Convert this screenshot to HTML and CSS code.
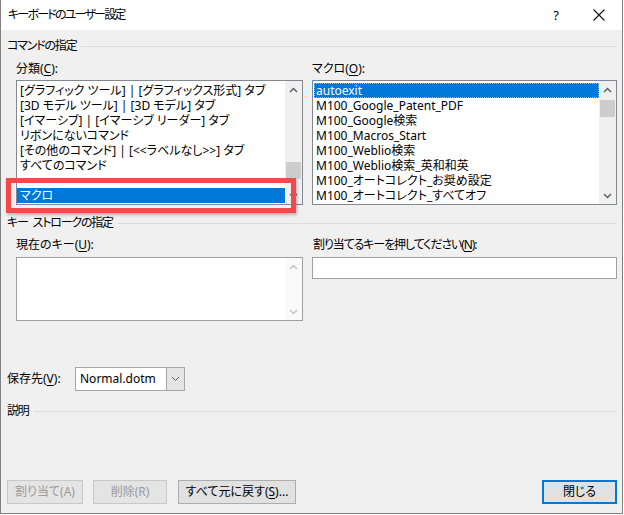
FILE: index.html
```html
<!DOCTYPE html>
<html lang="ja">
<head>
<meta charset="utf-8">
<title>キーボードのユーザー設定</title>
<link rel="stylesheet" href="styles.css">
</head>
<body>
<div class="window">
  <div class="titlebar">
    <span class="title">キーボードのユーザー設定</span>
    <span class="help">?</span>
    <span class="close"><svg width="12" height="12" viewBox="0 0 12 12"><path d="M0.5 0.5 L11.5 11.5 M11.5 0.5 L0.5 11.5" stroke="#111" stroke-width="1.1" fill="none"/></svg></span>
  </div>
  <div class="content">
    <div class="group"><span class="group-text">コマンドの指定</span></div>
    <div class="cols cols-top">
      <div class="field">
        <div class="label">分類(<u>C</u>):</div>
        <div class="listbox list-big">
          <ul class="items">
            <li>[グラフィック ツール] | [グラフィックス形式] タブ</li>
            <li>[3D モデル ツール] | [3D モデル] タブ</li>
            <li>[イマーシブ] | [イマーシブ リーダー] タブ</li>
            <li>リボンにないコマンド</li>
            <li>[その他のコマンド] | [&lt;&lt;ラベルなし&gt;&gt;] タブ</li>
            <li>すべてのコマンド</li>
            <li>&nbsp;</li>
            <li class="sel">マクロ</li>
          </ul>
          <div class="scrollbar">
            <div class="sb-btn"><svg width="9" height="6" viewBox="0 0 9 6"><path d="M1 5 L4.5 1.5 L8 5" fill="none" stroke="#606060" stroke-width="1.5"/></svg></div>
            <div class="sb-track"><div class="thumb" style="margin-top:64px"></div></div>
            <div class="sb-btn"><svg width="9" height="6" viewBox="0 0 9 6"><path d="M1 1 L4.5 4.5 L8 1" fill="none" stroke="#606060" stroke-width="1.5"/></svg></div>
          </div>
        </div>
      </div>
      <div class="field">
        <div class="label">マクロ(<u>O</u>):</div>
        <div class="listbox list-big">
          <ul class="items items-right">
            <li class="sel focus">autoexit</li>
            <li>M100_Google_Patent_PDF</li>
            <li>M100_Google検索</li>
            <li>M100_Macros_Start</li>
            <li>M100_Weblio検索</li>
            <li>M100_Weblio検索_英和和英</li>
            <li>M100_オートコレクト_お奨め設定</li>
            <li>M100_オートコレクト_すべてオフ</li>
          </ul>
          <div class="scrollbar">
            <div class="sb-btn"><svg width="9" height="6" viewBox="0 0 9 6"><path d="M1 5 L4.5 1.5 L8 5" fill="none" stroke="#606060" stroke-width="1.5"/></svg></div>
            <div class="sb-track"><div class="thumb" style="margin-top:2px"></div></div>
            <div class="sb-btn"><svg width="9" height="6" viewBox="0 0 9 6"><path d="M1 1 L4.5 4.5 L8 1" fill="none" stroke="#606060" stroke-width="1.5"/></svg></div>
          </div>
        </div>
      </div>
    </div>

    <div class="group group-keys"><span class="group-text">キー ストロークの指定</span></div>
    <div class="cols cols-mid">
      <div class="field">
        <div class="label">現在のキー(<u>U</u>):</div>
        <div class="listbox list-keys">
          <ul class="items"></ul>
          <div class="scrollbar sb-disabled">
            <div class="sb-btn"><svg width="9" height="6" viewBox="0 0 9 6"><path d="M1 5 L4.5 1.5 L8 5" fill="none" stroke="#c4c4c4" stroke-width="1.5"/></svg></div>
            <div class="sb-track"></div>
            <div class="sb-btn"><svg width="9" height="6" viewBox="0 0 9 6"><path d="M1 1 L4.5 4.5 L8 1" fill="none" stroke="#c4c4c4" stroke-width="1.5"/></svg></div>
          </div>
        </div>
      </div>
      <div class="field">
        <div class="label label-new">割り当てるキーを押してください(<u>N</u>):</div>
        <div class="textbox"></div>
      </div>
    </div>

    <div class="save-row">
      <span class="save-label">保存先(<u>V</u>):</span>
      <div class="combo">
        <span class="combo-text">Normal.dotm</span>
        <span class="combo-btn"><svg width="9" height="6" viewBox="0 0 9 6"><path d="M1 1 L4.5 4.5 L8 1" fill="none" stroke="#606060" stroke-width="1"/></svg></span>
      </div>
    </div>

    <div class="group group-desc"><span class="group-text">説明</span></div>

    <div class="buttons">
      <button class="btn disabled btn-assign">割り当て(A)</button>
      <button class="btn disabled btn-delete">削除(R)</button>
      <button class="btn btn-reset">すべて元に戻す(<u>S</u>)...</button>
      <button class="btn btn-close">閉じる</button>
    </div>
  </div>
  <div class="annotation"></div>
</div>
</body>
</html>
```
FILE: styles.css
```css
* { box-sizing: border-box; }
html, body { margin: 0; padding: 0; background: #ffffff; }
body {
  font-family: "Noto Sans", "Noto Sans CJK JP", sans-serif;
  font-size: 12px;
  color: #000;
  font-feature-settings: "palt";
}
u { text-decoration: underline; text-underline-offset: 2px; }

.window {
  position: relative;
  width: 623px;
  height: 514px;
  background: #f0f0f0;
  border: 1px solid #808080;
  border-top: none;
  display: flex;
  flex-direction: column;
}

.titlebar {
  height: 30px;
  background: #ffffff;
  display: flex;
  align-items: center;
  padding-left: 7px;
}
.title { flex: 1; line-height: 16px; letter-spacing: -1.8px; }
.help { width: 40px; text-align: center; font-size: 13px; }
.close { width: 46px; display: flex; justify-content: center; align-items: center; }
.close svg { display: block; }

.content {
  flex: 1;
  display: flex;
  flex-direction: column;
  padding: 8px 5px 9px 6px;
}

.group {
  display: flex;
  align-items: center;
  line-height: 16px;
  height: 16px;
}
.group-text { letter-spacing: -1.2px; word-spacing: 3px; }
.group::after {
  content: "";
  flex: 1;
  height: 1px;
  background: #dcdcdc;
  margin-left: 5px;
}
.group-keys { margin-top: 10px; }
.group-desc { margin-top: 12px; }

.cols {
  display: grid;
  grid-template-columns: 287px 305px;
  column-gap: 9px;
  margin-left: 9px;
}
.cols-top { margin-top: 7px; }
.cols-mid { margin-top: 6px; }

.label { line-height: 16px; height: 16px; }
.cols-top .label { margin-bottom: 3px; }
.cols-mid .label { margin-bottom: 4px; }
.label-new { margin-left: 1px; letter-spacing: -1.1px; }

.listbox {
  display: flex;
  background: #ffffff;
  border: 1px solid #828790;
}
.list-big { height: 125px; }
.list-keys { height: 64px; border-color: #a0a0a0; }

.items {
  flex: 1;
  list-style: none;
  margin: 0;
  padding: 2px 0 0;
  overflow: hidden;
  min-width: 0;
}
.items li {
  height: 15px;
  line-height: 15px;
  padding-left: 3px;
  white-space: nowrap;
}
.items-right li { margin-left: 1px; padding-left: 2px; }
.items li.sel { background: #0078d7; color: #ffffff; }
.items li.focus { outline: 1px dotted #f3a24a; outline-offset: -1px; }

.scrollbar {
  width: 17px;
  background: #f0f0f0;
  display: flex;
  flex-direction: column;
}
.sb-disabled { background: #fafafa; }
.sb-btn {
  height: 17px;
  display: flex;
  align-items: center;
  justify-content: center;
}
.sb-btn svg { display: block; }
.sb-track { flex: 1; }
.thumb { height: 17px; margin-left: 1px; margin-right: 1px; background: #cdcdcd; }

.textbox {
  height: 22px;
  background: #ffffff;
  border: 1px solid #a0a0a0;
}

.save-row {
  margin-top: 46px;
  display: flex;
  align-items: center;
  height: 24px;
}
.save-label { width: 68px; line-height: 16px; }
.combo {
  width: 110px;
  height: 24px;
  background: #ffffff;
  border: 1px solid #a6a6a6;
  display: flex;
  align-items: stretch;
}
.combo-text { flex: 1; padding-left: 4px; line-height: 22px; color: #000; }
.combo-btn {
  width: 18px;
  background: #e5e5e5;
  border-left: 1px solid #a6a6a6;
  display: flex;
  align-items: center;
  justify-content: center;
}

.buttons {
  margin-top: auto;
  display: flex;
  gap: 10px;
  height: 24px;
}
.btn {
  font: inherit;
  height: 24px;
  padding: 0;
  background: #e1e1e1;
  border: 1px solid #adadad;
  color: #000;
  line-height: 20px;
}
.btn.disabled { background: #e4e4e4; border-color: #c8c8c8; color: #9b9b9b; }
.btn-assign { width: 76px; }
.btn-delete { width: 74px; }
.btn-reset { width: 118px; margin-left: 1px; }
.btn-close {
  width: 75px;
  margin-left: auto;
  border: 2px solid #0078d7;
}

.annotation {
  position: absolute;
  left: 5px;
  top: 178px;
  width: 290px;
  height: 35px;
  border: 5px solid #f24a4a;
  box-shadow: 1px 2px 3px rgba(0, 0, 0, 0.25);
}
```
